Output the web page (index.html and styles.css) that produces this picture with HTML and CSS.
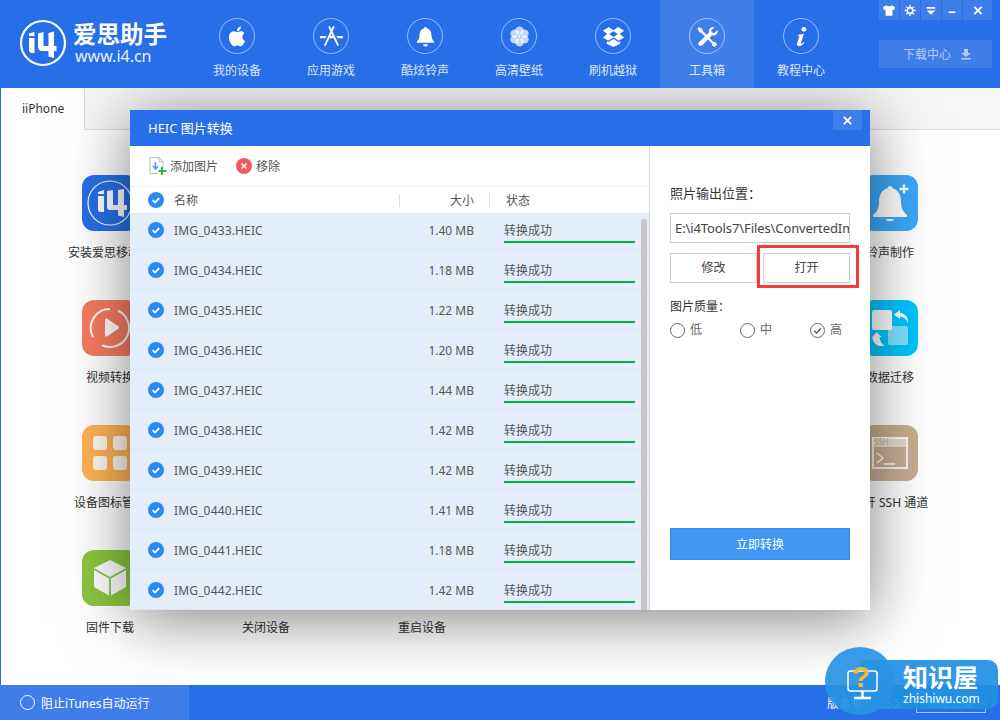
FILE: index.html
```html
<!DOCTYPE html>
<html lang="zh">
<head>
<meta charset="utf-8">
<title>爱思助手</title>
<link rel="stylesheet" href="styles.css">
</head>
<body>
<div class="app">
  <header class="top">
    <div class="logo">
      <svg class="logo-mark" viewBox="0 0 48 48"><circle cx="24" cy="24" r="22" fill="none" stroke="#fff" stroke-width="2.200"/><path d="M10 14.500l5.500-1.500v4H10zM10 19h5.500v15H13c-2 0-3-1-3-3zM19 14.500l5.500-1.500v14h5V14l5.500-1.500V27h2.500v5H35v7l-5.500-1.500V32H23c-2.500 0-4-1.500-4-4z" fill="#fff"/></svg>
      <div class="logo-text">
        <div class="logo-cn">爱思助手</div>
        <div class="logo-url">www.i4.cn</div>
      </div>
    </div>
    <nav class="nav">
      <div class="nav-item"><span class="nav-ic"><svg viewBox="0 0 24 24"><path fill="#fff" d="M17.050 12.540c-.03-2.600 2.120-3.850 2.220-3.910-1.210-1.770-3.090-2.010-3.760-2.040-1.600-.16-3.120.94-3.930.94-.81 0-2.060-.92-3.390-.89-1.740.03-3.350 1.010-4.250 2.570-1.810 3.140-.46 7.800 1.300 10.350.86 1.250 1.890 2.650 3.240 2.600 1.300-.05 1.790-.84 3.360-.84s2.010.84 3.390.81c1.400-.02 2.290-1.270 3.150-2.530.99-1.450 1.400-2.860 1.420-2.930-.03-.01-2.720-1.040-2.750-4.130zM14.470 4.900c.72-.87 1.200-2.070 1.070-3.270-1.030.04-2.280.69-3.020 1.550-.66.77-1.240 2-1.090 3.170 1.150.09 2.320-.58 3.040-1.450z"/></svg></span><span>我的设备</span></div>
      <div class="nav-item"><span class="nav-ic"><svg viewBox="0 0 24 24"><path d="M14.500 1.500L5 21.500M9.500 1.500L19 21.500" fill="none" stroke="#fff" stroke-width="2"/><path d="M0 11.500h7l-1.500 2.300H0zM24 11.500h-7l1.500 2.300H24zM9 11.500h6v2.300H9z" fill="#fff"/></svg></span><span>应用游戏</span></div>
      <div class="nav-item"><span class="nav-ic"><svg viewBox="0 0 24 24"><path fill="#fff" d="M12 2c1 0 1.700.7 1.800 1.600 2.900.8 4.400 3.200 4.400 6.200 0 4 1 5.600 2.800 7.200v1.500H3V17c1.800-1.600 2.800-3.200 2.800-7.200 0-3 1.500-5.400 4.400-6.200C10.300 2.700 11 2 12 2zM9.500 20h5a2.500 2.500 0 0 1-5 0z"/></svg></span><span>酷炫铃声</span></div>
      <div class="nav-item"><span class="nav-ic"><svg viewBox="0 0 24 24"><g fill="#fff" fill-opacity=".72"><circle cx="12" cy="6" r="4.400"/><circle cx="12" cy="18" r="4.400"/><circle cx="6.800" cy="9" r="4.400"/><circle cx="17.200" cy="9" r="4.400"/><circle cx="6.800" cy="15" r="4.400"/><circle cx="17.200" cy="15" r="4.400"/></g><circle cx="12" cy="12" r="1.500" fill="#fff"/></svg></span><span>高清壁纸</span></div>
      <div class="nav-item"><span class="nav-ic"><svg viewBox="0 0 24 24"><path fill="#fff" d="M7 2l5 3.500L17 2l6 4-4.500 3.500L23 13l-5.500 3.500L12 13l-5.500 3.500L1 13l4.500-3.500L1 6zM12 6.500L7.500 9.500 12 12.500l4.500-3zM5 17l1.500 1L12 14.500l5.500 3.500L19 17v2.500L12 23l-7-3.500z"/></svg></span><span>刷机越狱</span></div>
      <div class="nav-item is-active"><span class="nav-ic"><svg viewBox="0 0 24 24"><path fill="#fff" d="M3 2l3.500 2 .5 2 11 11.500 2.500.5 1.500 2.500-2.500 2.500-2.500-1.500-.5-2.500L5.500 8 3.500 7.500 1.500 4z"/><path fill="#fff" d="M22.500 5.500c.5 2.300-.5 4.500-3 5.300-1 .3-2 .2-2.800-.1L6.600 21.200c-1 1-2.600 1-3.600 0-.8-.9-.8-2.300.1-3.200L13.600 7.700c-.4-1.600 0-3.300 1.400-4.500 1.200-1 2.700-1.300 4.100-.9L16 5.400l.6 2.300 2.400.7z"/></svg></span><span>工具箱</span></div>
      <div class="nav-item"><span class="nav-ic"><svg viewBox="0 0 24 24"><circle cx="14.500" cy="4.500" r="2.500" fill="#fff"/><path fill="#fff" d="M8 10.500l6.500-1.300-3 9.500c-.2.800.6 1 1.300.4l1.500-1.300.5.600c-1.800 2.400-3.500 3.600-5.400 3.600-1.800 0-2.500-1.200-2-2.900L9.700 12c.1-.5-.2-.8-1.600-.7z"/></svg></span><span>教程中心</span></div>
    </nav>
    <div class="top-right">
      <div class="win-btns">
        <span class="win"><svg viewBox="0 0 14 12"><path fill="#fff" d="M4 0L0 2l1 3.500 2-.5v7h8V5l2 .5L14 2l-4-2c-.5 1.500-5.500 1.500-6 0z"/></svg></span>
        <span class="win"><svg viewBox="0 0 14 14"><circle cx="7" cy="7" r="3.600" fill="none" stroke="#fff" stroke-width="2.200"/><path d="M7 0v14M0 7h14M2 2l10 10M12 2L2 12" stroke="#fff" stroke-width="1.600" stroke-dasharray="2.400 9.200 2.400"/></svg></span>
        <span class="win"><svg viewBox="0 0 14 12"><path d="M2 2h10v2H2zM2 6h10L7 11z" fill="#fff"/></svg></span>
        <span class="win"><svg viewBox="0 0 14 12"><path d="M3 7h8v2H3z" fill="#fff"/></svg></span>
        <span class="win win-close"><svg viewBox="0 0 12 12"><path d="M2 2l8 8M10 2l-8 8" stroke="#fff" stroke-width="2"/></svg></span>
      </div>
      <div class="dl"><span>下载中心</span><svg viewBox="0 0 12 12"><path d="M4 1h4v4h3L6 9 1 5h3zM1 10h10v1.500H1z" fill="#fff" fill-opacity=".6"/></svg></div>
    </div>
  </header>

  <main class="main">
    <div class="tabs"><div class="tab">iiPhone</div></div>
    <div class="tools">
      <div class="tool"><div class="tool-ic c-i4"><svg viewBox="0 0 56 56"><circle cx="28" cy="28" r="22" fill="none" stroke="#fff" stroke-width="1.200"/><path d="M16 17l6-2v4h-6zM16 21h6v16h-3.500c-1.500 0-2.500-1-2.500-2.500zM25 16l6-1v15h5V15l6-1v16h3v5h-3v7l-6-1.500V35h-8c-2 0-3-1-3-3z" fill="#fff"/></svg></div><div>安装爱思移动端</div></div>
      <div class="tool"></div><div class="tool"></div><div class="tool"></div><div class="tool"></div>
      <div class="tool"><div class="tool-ic c-bell"><svg viewBox="0 0 56 56"><path fill="#fff" d="M28 11c1.400 0 2.400 1 2.500 2.200C37 15 39 21 39 27c0 6 2 10 6 13v2H11v-2c4-3 6-7 6-13 0-6 2-12 8.500-13.800C25.600 12 26.600 11 28 11zM24 44h8c-.8 3-7.200 3-8 0z"/><path d="M37.500 14h9M42 9.500v9" stroke="#fff" stroke-width="2.400"/></svg></div><div>铃声制作</div></div>

      <div class="tool"><div class="tool-ic c-video"><svg viewBox="0 0 56 56"><path d="M28 9a19 19 0 0 1 0 38" fill="none" stroke="#fff" stroke-width="2" transform="rotate(25 28 28)"/><path d="M28 9a19 19 0 0 0-17 28" fill="none" stroke="#fff" stroke-width="2"/><path d="M23 20c0-1.500 1-2 2.300-1.300l11 7.500c1 .7 1 1.900 0 2.600l-11 7.500C24 37 23 36.500 23 35z" fill="#fff"/></svg></div><div>视频转换</div></div>
      <div class="tool"></div><div class="tool"></div><div class="tool"></div><div class="tool"></div>
      <div class="tool"><div class="tool-ic c-move"><svg viewBox="0 0 56 56"><rect x="10" y="10" width="20" height="20" rx="2" fill="#fff"/><rect x="26" y="26" width="20" height="19" rx="2" fill="#fff" fill-opacity=".5"/><path d="M38 10l-6 4.500 6 4.500v-2.500c4 .5 6.500 2.500 8 6.500 .5-6-3-9.500-8-10zM18 46l-.5-.1c-4-.8-6.500-4-7-8l-1 .1 5-6 5 5-2 .1c.3 3.500 2 6.800 5 8.900z" fill="#fff"/></svg></div><div>数据迁移</div></div>

      <div class="tool"><div class="tool-ic c-grid"><svg viewBox="0 0 56 56"><g fill="#fff" fill-opacity=".9"><rect x="11" y="11" width="14" height="14" rx="3"/><rect x="31" y="11" width="14" height="14" rx="3"/><rect x="11" y="31" width="14" height="14" rx="3"/><rect x="31" y="31" width="14" height="14" rx="3"/></g></svg></div><div>设备图标管理</div></div>
      <div class="tool"></div><div class="tool"></div><div class="tool"></div><div class="tool"></div>
      <div class="tool"><div class="tool-ic c-ssh"><svg viewBox="0 0 56 56"><rect x="11" y="13" width="34" height="30" fill="none" stroke="#fff" stroke-opacity=".85" stroke-width="2"/><rect x="10" y="12" width="36" height="10" fill="#fff" fill-opacity=".55"/><text x="12" y="20" class="ssh-txt">SSH</text><path d="M15 28l6 5-6 5M22 39h11" fill="none" stroke="#fff" stroke-width="1.300"/></svg></div><div>打开 SSH 通道</div></div>

      <div class="tool"><div class="tool-ic c-box"><svg viewBox="0 0 56 56"><path d="M28 10l16 8v19l-16 9-16-9V18z" fill="#fff"/><path d="M12 19l16 9 16-9M28 28v18" fill="none" stroke="#8cc63f" stroke-width="1.800"/></svg></div><div>固件下载</div></div>
      <div class="tool"><div class="tool-ic"></div><div>关闭设备</div></div>
      <div class="tool"><div class="tool-ic"></div><div>重启设备</div></div>
    </div>

    <section class="modal">
      <div class="modal-head">
        <span>HEIC 图片转换</span>
        <span class="modal-x"><svg viewBox="0 0 12 12"><path d="M2 2l8 8M10 2l-8 8" stroke="#fff" stroke-width="2"/></svg></span>
      </div>
      <div class="modal-body">
        <div class="left">
          <div class="bar">
            <span class="bar-btn"><svg class="ic-add" viewBox="0 0 18 18"><path d="M1 .5h9l4 4v6M10 .5v4h4" fill="none" stroke="#bbb"/><path d="M1 .5v16h8" fill="none" stroke="#bbb"/><path d="M6.500 5v6M4 9l2.500 3L9 9" fill="none" stroke="#4a9cf0" stroke-width="1.500"/><path d="M13 10v8M9.500 14h8" stroke="#3ab54a" stroke-width="2.200"/></svg>添加图片</span>
            <span class="bar-btn"><svg class="ic-del" viewBox="0 0 16 16"><circle cx="8" cy="8" r="8" fill="#ee5a5f"/><path d="M5.500 5.500l5 5M10.500 5.500l-5 5" stroke="#fff" stroke-width="1.600"/></svg>移除</span>
          </div>
          <div class="thead">
            <svg class="chk" viewBox="0 0 16 16"><circle cx="8" cy="8" r="8" fill="#2b8bf2"/><path d="M4.500 8.200l2.500 2.300 4.300-4.400" fill="none" stroke="#fff" stroke-width="1.800"/></svg>
            <span class="c-name">名称</span><span class="c-size">大小</span><span class="c-stat">状态</span>
          </div>
          <div class="list">
            <div class="rows">
              <div class="row"><svg class="chk" viewBox="0 0 16 16"><circle cx="8" cy="8" r="8" fill="#2b8bf2"/><path d="M4.500 8.200l2.500 2.300 4.300-4.400" fill="none" stroke="#fff" stroke-width="1.800"/></svg><span class="r-name">IMG_0433.HEIC</span><span class="r-size">1.40 MB</span><span class="r-stat">转换成功</span></div>
              <div class="row"><svg class="chk" viewBox="0 0 16 16"><circle cx="8" cy="8" r="8" fill="#2b8bf2"/><path d="M4.500 8.200l2.500 2.300 4.300-4.400" fill="none" stroke="#fff" stroke-width="1.800"/></svg><span class="r-name">IMG_0434.HEIC</span><span class="r-size">1.18 MB</span><span class="r-stat">转换成功</span></div>
              <div class="row"><svg class="chk" viewBox="0 0 16 16"><circle cx="8" cy="8" r="8" fill="#2b8bf2"/><path d="M4.500 8.200l2.500 2.300 4.300-4.400" fill="none" stroke="#fff" stroke-width="1.800"/></svg><span class="r-name">IMG_0435.HEIC</span><span class="r-size">1.22 MB</span><span class="r-stat">转换成功</span></div>
              <div class="row"><svg class="chk" viewBox="0 0 16 16"><circle cx="8" cy="8" r="8" fill="#2b8bf2"/><path d="M4.500 8.200l2.500 2.300 4.300-4.400" fill="none" stroke="#fff" stroke-width="1.800"/></svg><span class="r-name">IMG_0436.HEIC</span><span class="r-size">1.20 MB</span><span class="r-stat">转换成功</span></div>
              <div class="row"><svg class="chk" viewBox="0 0 16 16"><circle cx="8" cy="8" r="8" fill="#2b8bf2"/><path d="M4.500 8.200l2.500 2.300 4.300-4.400" fill="none" stroke="#fff" stroke-width="1.800"/></svg><span class="r-name">IMG_0437.HEIC</span><span class="r-size">1.44 MB</span><span class="r-stat">转换成功</span></div>
              <div class="row"><svg class="chk" viewBox="0 0 16 16"><circle cx="8" cy="8" r="8" fill="#2b8bf2"/><path d="M4.500 8.200l2.500 2.300 4.300-4.400" fill="none" stroke="#fff" stroke-width="1.800"/></svg><span class="r-name">IMG_0438.HEIC</span><span class="r-size">1.42 MB</span><span class="r-stat">转换成功</span></div>
              <div class="row"><svg class="chk" viewBox="0 0 16 16"><circle cx="8" cy="8" r="8" fill="#2b8bf2"/><path d="M4.500 8.200l2.500 2.300 4.300-4.400" fill="none" stroke="#fff" stroke-width="1.800"/></svg><span class="r-name">IMG_0439.HEIC</span><span class="r-size">1.42 MB</span><span class="r-stat">转换成功</span></div>
              <div class="row"><svg class="chk" viewBox="0 0 16 16"><circle cx="8" cy="8" r="8" fill="#2b8bf2"/><path d="M4.500 8.200l2.500 2.300 4.300-4.400" fill="none" stroke="#fff" stroke-width="1.800"/></svg><span class="r-name">IMG_0440.HEIC</span><span class="r-size">1.41 MB</span><span class="r-stat">转换成功</span></div>
              <div class="row"><svg class="chk" viewBox="0 0 16 16"><circle cx="8" cy="8" r="8" fill="#2b8bf2"/><path d="M4.500 8.200l2.500 2.300 4.300-4.400" fill="none" stroke="#fff" stroke-width="1.800"/></svg><span class="r-name">IMG_0441.HEIC</span><span class="r-size">1.18 MB</span><span class="r-stat">转换成功</span></div>
              <div class="row"><svg class="chk" viewBox="0 0 16 16"><circle cx="8" cy="8" r="8" fill="#2b8bf2"/><path d="M4.500 8.200l2.500 2.300 4.300-4.400" fill="none" stroke="#fff" stroke-width="1.800"/></svg><span class="r-name">IMG_0442.HEIC</span><span class="r-size">1.42 MB</span><span class="r-stat">转换成功</span></div>
            </div>
            <div class="thumb"></div>
          </div>
        </div>
        <aside class="right">
          <div class="lbl lbl-out">照片输出位置：</div>
          <div class="path">E:\i4Tools7\Files\ConvertedImages</div>
          <div class="btns">
            <div class="btn">修改</div>
            <div class="btn">打开</div>
            <div class="mark"></div>
          </div>
          <div class="lbl lbl-q">图片质量：</div>
          <div class="radios">
            <span class="radio"><i class="dot"></i>低</span>
            <span class="radio"><i class="dot"></i>中</span>
            <span class="radio"><svg class="dot-on" viewBox="0 0 15 15"><circle cx="7.500" cy="7.500" r="7" fill="none" stroke="#666"/><path d="M4.200 7.800l2.400 2.200 4.200-4.400" fill="none" stroke="#555" stroke-width="1.400"/></svg>高</span>
          </div>
          <div class="go">立即转换</div>
        </aside>
      </div>
    </section>
  </main>

  <footer class="foot">
    <div class="foot-left"><i class="ring"></i>阻止iTunes自动运行</div>
    <div class="foot-right"><span>版本号：7.50</span><span class="upd">检查更新</span></div>
  </footer>

  <div class="wm">
    <div class="wm-pill">
      <div class="wm-cn">知识屋</div>
      <div class="wm-en">zhishiwu.com</div>
    </div>
    <div class="wm-disc"><svg viewBox="0 0 46 46"><rect x="11" y="13" width="29" height="20" rx="2.500" fill="none" stroke="#fff" stroke-width="1.500"/><path d="M25.500 33v6M17 40h17" stroke="#fff" stroke-width="2.500"/><text x="24" y="29" class="wm-q">?</text></svg></div>
  </div>
</div>
</body>
</html>
```

FILE: styles.css
```css
* { box-sizing: border-box; }
html, body { margin: 0; padding: 0; }
body {
  width: 1000px;
  height: 720px;
  overflow: hidden;
  font-family: "Noto Sans", "Noto Sans CJK SC", sans-serif;
  font-size: 12px;
  color: #333;
  background: #fff;
}
.app {
  position: relative;
  width: 1000px;
  height: 720px;
  display: flex;
  flex-direction: column;
  overflow: hidden;
}

/* header */
.top {
  height: 88px;
  flex: none;
  background: #266fe8;
  display: flex;
  color: #fff;
}
.logo {
  width: 190px;
  flex: none;
  display: flex;
  align-items: center;
  padding: 0 0 0 19px;
  gap: 6px;
  margin-top: -2px;
}
.logo-mark { width: 48px; height: 48px; flex: none; }
.logo-text { display: flex; flex-direction: column; }
.logo-cn { font-size: 23.500px; line-height: 26px; font-weight: 700; white-space: nowrap; }
.logo-url { font-size: 16px; line-height: 19px; opacity: .9; padding-left: 2px; }
.nav { display: flex; flex: none; }
.nav-item {
  width: 94px;
  height: 88px;
  display: flex;
  flex-direction: column;
  align-items: center;
  padding-top: 18px;
  gap: 8px;
  color: rgba(255,255,255,.85);
  line-height: 17px;
}
.nav-item.is-active { background: #3d7eea; }
.nav-ic {
  width: 36px;
  height: 36px;
  border: 1px solid rgba(255,255,255,.55);
  border-radius: 50%;
  display: flex;
  align-items: center;
  justify-content: center;
}
.nav-ic svg { width: 23px; height: 23px; }
.top-right { margin-left: auto; width: 121px; display: flex; flex-direction: column; padding-right: 8px; }
.win-btns { display: flex; gap: 1px; height: 20px; }
.win {
  width: 20px;
  height: 20px;
  background: #3d7eea;
  display: flex;
  align-items: center;
  justify-content: center;
}
.win svg { width: 12px; height: 11px; }
.win-close { width: 29px; }
.dl {
  margin-top: 20px;
  height: 28px;
  background: #3d7eea;
  color: rgba(255,255,255,.6);
  display: flex;
  align-items: center;
  justify-content: center;
  gap: 9px;
  padding-left: 4px;
}
.dl svg { width: 12px; height: 12px; }

/* main */
.main {
  position: relative;
  flex: 1;
  min-height: 0;
  overflow: hidden;
  border-left: 1px solid #266fe8;
  background: #fff;
}
.tabs {
  height: 42px;
  background: #f6f6f6;
  border-bottom: 1px solid #ddd;
}
.tab {
  width: 84px;
  height: 42px;
  background: #fff;
  border-right: 1px solid #ddd;
  padding: 12px 0 0 21px;
  line-height: 18px;
  color: #333;
}
.tools {
  display: grid;
  grid-template-columns: repeat(6, 156px);
  grid-auto-rows: 125px;
  padding: 45px 0 0 31px;
  color: #333;
}
.tool { display: flex; flex-direction: column; align-items: center; gap: 12px; line-height: 20px; white-space: nowrap; }
.tool-ic { width: 56px; height: 56px; border-radius: 12px; flex: none; }
.tool-ic svg { width: 56px; height: 56px; display: block; }
.ssh-txt { font-size: 8px; fill: #c7ae92; font-family: "Noto Sans", sans-serif; }
.c-i4 { background: #2670e8; }
.c-video { background: #f97b62; }
.c-grid { background: #ffb354; }
.c-box { background: #8cc63f; }
.c-bell { background: #3ca9fb; }
.c-move { background: #00c6ff; }
.c-ssh { background: #c7ae92; }

/* modal */
.modal {
  position: absolute;
  left: 129px;
  top: 22px;
  width: 740px;
  height: 500px;
  background: #fff;
  box-shadow: 0 8px 60px rgba(0,0,0,.5);
  display: flex;
  flex-direction: column;
}
.modal-head {
  height: 36px;
  flex: none;
  background: #266fe8;
  color: #fff;
  font-size: 13px;
  line-height: 36px;
  padding-left: 18px;
  position: relative;
}
.modal-x {
  position: absolute;
  right: 8px;
  top: 0;
  width: 29px;
  height: 20px;
  background: #3d7eea;
  display: flex;
  align-items: center;
  justify-content: center;
}
.modal-x svg { width: 11px; height: 11px; }
.modal-body { flex: 1; min-height: 0; display: flex; }
.left { width: 520px; flex: none; border-right: 1px solid #d8d8d8; display: flex; flex-direction: column; }
.bar {
  height: 41px;
  flex: none;
  display: flex;
  align-items: center;
  padding-left: 19px;
  gap: 18px;
  border-bottom: 1px solid #efefef;
  color: #555;
}
.bar-btn { display: flex; align-items: center; gap: 3px; }
.ic-add { width: 18px; height: 18px; }
.ic-del { width: 16px; height: 16px; margin-right: 1px; }
.chk { width: 16px; height: 16px; flex: none; }
.thead {
  height: 27px;
  flex: none;
  display: flex;
  align-items: center;
  padding-left: 18px;
  border-bottom: 1px solid #dfe5ec;
  color: #555;
}
.c-name { width: 226px; margin-left: 10px; border-right: 1px solid #ddd; line-height: 13px; }
.c-size { width: 90px; text-align: right; padding-right: 15px; border-right: 1px solid #ddd; line-height: 13px; }
.c-stat { margin-left: 16px; }
.list { flex: 1; min-height: 0; overflow: hidden; position: relative; background: #e4eefb; }
.rows { margin-top: -4px; }
.row {
  height: 40px;
  display: flex;
  align-items: center;
  padding: 1px 0 0 18px;
  border-bottom: 1px solid #dbe5f2;
  color: #555;
}
.r-name { width: 226px; margin-left: 10px; letter-spacing: .15px; white-space: nowrap; }
.r-size { width: 90px; text-align: right; padding-right: 16px; white-space: nowrap; }
.r-stat {
  width: 131px;
  margin-left: 14px;
  height: 24px;
  margin-top: 8px;
  padding-top: 1px;
  line-height: 21px;
  border-bottom: 2px solid #00b050;
  align-self: flex-start;
}
.thumb {
  position: absolute;
  right: 2px;
  top: 5px;
  bottom: 0;
  width: 6px;
  border-radius: 3px 3px 0 0;
  background: #c8c8c8;
}
.right { width: 220px; min-width: 0; flex: none; padding: 0 20px; display: flex; flex-direction: column; color: #333; }
.lbl { line-height: 18px; }
.lbl-out { margin-top: 38px; font-size: 13px; }
.path {
  margin-top: 11px;
  width: 180px;
  height: 30px;
  border: 1px solid #ccc;
  font-size: 13px;
  letter-spacing: -.1px;
  line-height: 28px;
  padding-left: 4px;
  overflow: hidden;
  white-space: nowrap;
  color: #444;
}
.btns { position: relative; margin-top: 10px; display: flex; justify-content: space-between; }
.btn {
  width: 87px;
  height: 30px;
  border: 1px solid #ccc;
  text-align: center;
  line-height: 28px;
  color: #444;
}
.mark {
  position: absolute;
  left: 87px;
  top: -8px;
  width: 102px;
  height: 43px;
  border: 3px solid #f33b3b;
}
.lbl-q { margin-top: 15px; }
.radios { margin-top: 4px; display: flex; color: #666; height: 20px; }
.radio { display: flex; align-items: center; gap: 5px; width: 70px; line-height: 20px; flex: none; }
.dot { width: 15px; height: 15px; border: 1px solid #666; border-radius: 50%; flex: none; }
.dot-on { width: 15px; height: 15px; flex: none; }
.go {
  margin-top: 188px;
  height: 32px;
  background: #4096f5;
  border: 1px solid #3a8cea;
  color: #fff;
  text-align: center;
  line-height: 31px;
}

/* footer */
.foot {
  height: 35px;
  flex: none;
  background: #266fe8;
  color: #fff;
  display: flex;
  align-items: center;
}
.foot-left {
  width: 189px;
  height: 35px;
  background: #3d7eea;
  display: flex;
  align-items: center;
  padding-left: 20px;
  gap: 6px;
}
.ring { width: 15px; height: 15px; border: 1px solid #fff; border-radius: 50%; flex: none; }
.foot-right { margin-left: auto; padding-right: 8px; display: flex; align-items: center; gap: 17px; width: 173px; }
.upd { border: 1px solid rgba(255,255,255,.6); padding: 0 10px; line-height: 19px; white-space: nowrap; }
.foot-right span:first-child { white-space: nowrap; }

/* watermark */
.wm { position: absolute; left: 825px; top: 647px; width: 175px; height: 68px; }
.wm-disc {
  position: absolute;
  left: 0;
  top: 0;
  width: 70px;
  height: 68px;
  border-radius: 50%;
  background: rgba(42,147,227,.93);
  display: flex;
  align-items: center;
  justify-content: center;
}
.wm-disc svg { width: 46px; height: 46px; }
.wm-q { font-size: 30px; font-weight: 700; fill: #f6b92b; text-anchor: middle; font-family: "Liberation Sans", sans-serif; }
.wm-pill {
  position: absolute;
  left: 35px;
  top: 13px;
  width: 138px;
  height: 49px;
  border-radius: 0 10px 10px 0;
  background: rgba(32,144,226,.93);
  color: #fff;
  padding: 3px 0 0 43px;
}
.wm-cn { font-size: 25px; font-weight: 700; line-height: 28px; white-space: nowrap; }
.wm-en { font-size: 12px; line-height: 15px; white-space: nowrap; }
```
